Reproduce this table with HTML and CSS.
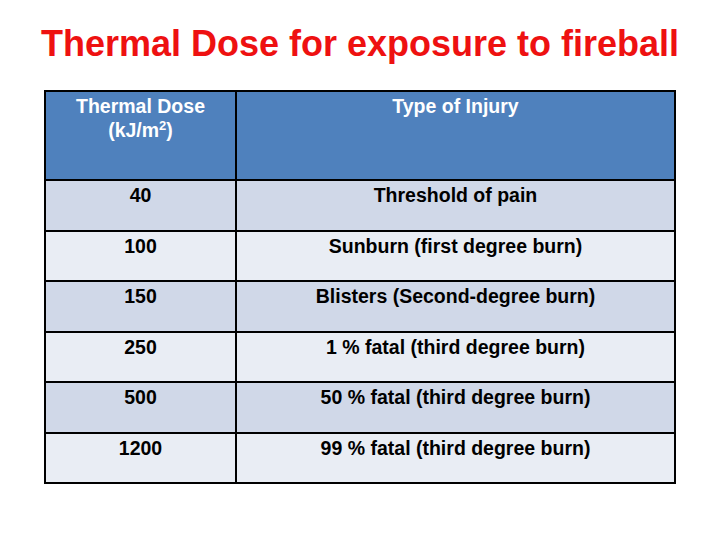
FILE: index.html
```html
<!DOCTYPE html>
<html>
<head>
<meta charset="utf-8">
<link rel="stylesheet" href="styles.css">
</head>
<body>
<h1 class="title">Thermal Dose for exposure to fireball</h1>
<table class="dose">
  <thead>
    <tr><th class="c1">Thermal Dose<br>(kJ/m<sup>2</sup>)</th><th class="c2">Type of Injury</th></tr>
  </thead>
  <tbody>
    <tr class="odd"><td>40</td><td>Threshold of pain</td></tr>
    <tr class="even"><td>100</td><td>Sunburn (first degree burn)</td></tr>
    <tr class="odd"><td>150</td><td>Blisters (Second-degree burn)</td></tr>
    <tr class="even"><td>250</td><td>1 % fatal (third degree burn)</td></tr>
    <tr class="odd"><td>500</td><td>50 % fatal (third degree burn)</td></tr>
    <tr class="even"><td>1200</td><td>99 % fatal (third degree burn)</td></tr>
  </tbody>
</table>
</body>
</html>
```
FILE: styles.css
```css
html, body { margin: 0; padding: 0; background: #fff; }
body { width: 720px; height: 540px; font-family: "Liberation Sans", Arial, sans-serif; }
.title {
  margin: 0;
  padding-top: 22px;
  text-align: center;
  color: #ee1111;
  font-size: 36px;
  font-weight: bold;
  line-height: 44px;
  height: 68px;
}
.dose {
  margin-left: 44px;
  width: 632px;
  border-collapse: collapse;
  border: 2px solid #000;
  font-weight: bold;
  font-size: 19.5px;
}
.dose th, .dose td {
  border: 2px solid #000;
  text-align: center;
  vertical-align: top;
  padding: 2px 4px 0;
  line-height: 24px;
}
.dose th { background: #4f81bd; color: #fff; font-weight: bold; height: 85px; }
.dose th.c1 { width: 181px; }
.dose td { height: 46.5px; color: #000; }
.dose tr.odd td { background: #d0d8e8; }
.dose tr.even td { background: #e9edf4; }
.dose sup { font-size: 13px; line-height: 0; vertical-align: 7px; }
```
